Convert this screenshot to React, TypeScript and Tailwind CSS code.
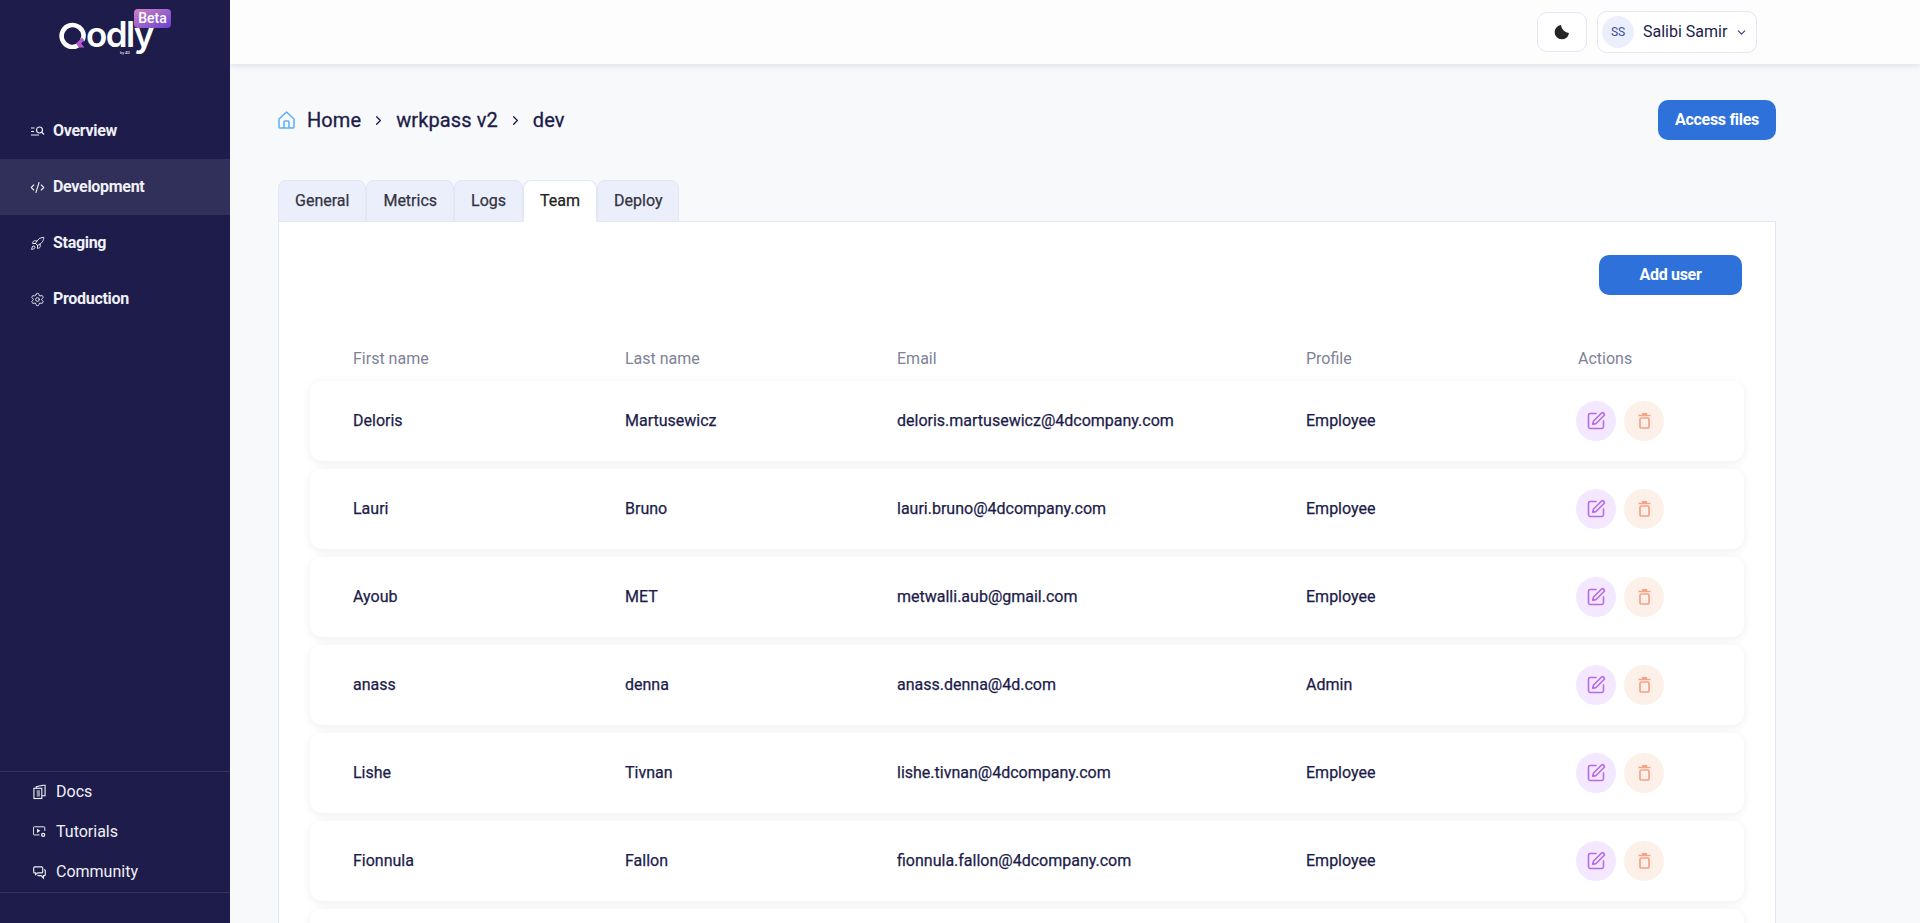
import React from 'react';
import { CodeXml, Rocket, Settings, SquarePen, ChevronDown, ChevronRight } from 'lucide-react';

const navItems = [
  { label: 'Overview', icon: <OverviewIcon /> },
  { label: 'Development', icon: <CodeXml size={15} strokeWidth={1.7} />, active: true },
  { label: 'Staging', icon: <Rocket size={15} strokeWidth={1.5} /> },
  { label: 'Production', icon: <Settings size={15} strokeWidth={1.5} /> },
];

const users = [
  { first: 'Deloris', last: 'Martusewicz', email: 'deloris.martusewicz@4dcompany.com', profile: 'Employee' },
  { first: 'Lauri', last: 'Bruno', email: 'lauri.bruno@4dcompany.com', profile: 'Employee' },
  { first: 'Ayoub', last: 'MET', email: 'metwalli.aub@gmail.com', profile: 'Employee' },
  { first: 'anass', last: 'denna', email: 'anass.denna@4d.com', profile: 'Admin' },
  { first: 'Lishe', last: 'Tivnan', email: 'lishe.tivnan@4dcompany.com', profile: 'Employee' },
  { first: 'Fionnula', last: 'Fallon', email: 'fionnula.fallon@4dcompany.com', profile: 'Employee' },
];

const tabs = ['General', 'Metrics', 'Logs', 'Team', 'Deploy'];

function OverviewIcon() {
  return (
    <svg width="15" height="15" viewBox="0 0 15 15" fill="none" stroke="currentColor" strokeWidth="1.2">
      <path d="M1 4h3.5M1 7.5h3M1 11h8" />
      <circle cx="9.5" cy="6" r="3" />
      <path d="M11.7 8.2l2.3 2.3" />
    </svg>
  );
}

function DocsIcon() {
  return (
    <svg width="14" height="16" viewBox="0 0 14 16" fill="none" stroke="currentColor" strokeWidth="1.2">
      <rect x="1" y="4" width="8.5" height="11" />
      <path d="M3.5 4V2.2L11 .8h2V12h-3.5" />
      <rect x="4" y="6" width="3.5" height="7" fill="currentColor" fillOpacity="0.55" stroke="none" />
    </svg>
  );
}

function TutorialsIcon() {
  return (
    <svg width="16" height="14" viewBox="0 0 16 14" fill="none" stroke="currentColor" strokeWidth="1.2">
      <path d="M8 10.6H1.5a1 1 0 0 1-1-1V1.6a1 1 0 0 1 1-1h12a1 1 0 0 1 1 1v4" />
      <path d="M5 3v5.2l4-2.6z" fill="currentColor" stroke="none" />
      <circle cx="12.5" cy="10.5" r="1.9" strokeWidth="1.6" />
    </svg>
  );
}

function CommunityIcon() {
  return (
    <svg width="15" height="15" viewBox="0 0 15 15" fill="none" stroke="currentColor" strokeWidth="1.3">
      <path d="M2 1h8a1.2 1.2 0 0 1 1.2 1.2v4.6A1.2 1.2 0 0 1 10 8H5.5L3 10V8H2A1.2 1.2 0 0 1 .8 6.8V2.2A1.2 1.2 0 0 1 2 1z" />
      <path d="M12.6 4.3a1.4 1.4 0 0 1 1.6 1.4v4a1.4 1.4 0 0 1-1.4 1.4h-.8V14l-2.6-2.9H6.5a2 2 0 0 1-1.4-.6" />
    </svg>
  );
}

function HomeIcon() {
  return (
    <svg width="17" height="18" viewBox="0 0 17 18" fill="none" stroke="#5aaefb" strokeWidth="1.5" strokeLinejoin="round">
      <path d="M1 8l7.5-7L16 8v8a1 1 0 0 1-1 1H2a1 1 0 0 1-1-1z" />
      <path d="M6 17v-6a1 1 0 0 1 1-1h3a1 1 0 0 1 1 1v6" />
    </svg>
  );
}

function TrashIcon() {
  return (
    <svg width="13" height="16" viewBox="0 0 13 16" fill="none" stroke="#f5a285" strokeWidth="1.7">
      <path d="M.5 2.5h12M4 .8h5" />
      <rect x="2" y="5" width="9" height="10" rx="1.2" />
    </svg>
  );
}

function MoonIcon() {
  return (
    <svg width="16" height="16" viewBox="0 0 16 16" fill="#252525">
      <path d="M7 1A7.2 7.2 0 1 0 15 9 9 9 0 0 1 7 1z" />
    </svg>
  );
}

function Logo() {
  return (
    <div className="relative h-[64px] w-full">
      <div className="absolute left-[59px] top-[22px] flex items-start">
        <svg width="28" height="27" viewBox="0 0 28 27">
          <path d="M19 23.6A11 11 0 1 1 24.6 13a11 11 0 0 1-1.4 5.5" fill="none" stroke="#ffffff" strokeWidth="4.6" />
          <path d="M23 15.5l-6 6 3 4h5.5l-3.4-4 3.2-3.2z" fill="#b45bd0" />
        </svg>
        <span className="ml-[-1px] mt-[-8px] font-['Inter',sans-serif] text-[35px] font-semibold leading-[40px] tracking-[-1.6px] text-white">odly</span>
      </div>
      <div className="absolute left-[120px] top-[50px] text-[4px] leading-[5px] text-white">by 4D</div>
      <div className="absolute left-[134px] top-[9px] flex h-[19px] w-[37px] items-center justify-center rounded-[4px] bg-gradient-to-br from-[#d47ec4] to-[#6a3ed0] text-[14px] font-medium text-white">Beta</div>
    </div>
  );
}

export default function App() {
  return (
    <div className="flex h-[923px] w-[1920px] overflow-hidden bg-[#f8f9fb] font-['Roboto',sans-serif]" id="team-page">

      {/* Sidebar */}
      <aside className="relative z-20 flex w-[230px] shrink-0 flex-col bg-[#1d1c4b] text-[#f0f0f6]">
        <Logo />
        <nav className="mt-[39px] flex flex-col">
          {navItems.map((item) => (
            <div key={item.label} className={`flex h-[56px] items-center gap-[8px] pl-[30px] ${item.active ? 'bg-[#30305a]' : ''}`}>
              <span className="flex w-[15px] justify-center">{item.icon}</span>
              <span className="text-[16px] font-bold tracking-[-0.3px]">{item.label}</span>
            </div>
          ))}
        </nav>
        <div className="mt-auto mb-[30px] flex flex-col border-y border-[#33335c]">
          <div className="flex h-[40px] items-center gap-[10px] pl-[33px]"><span className="flex w-[13px] justify-center"><DocsIcon /></span><span className="text-[16px]">Docs</span></div>
          <div className="flex h-[40px] items-center gap-[10px] pl-[33px]"><span className="flex w-[13px] justify-center"><TutorialsIcon /></span><span className="text-[16px]">Tutorials</span></div>
          <div className="flex h-[40px] items-center gap-[10px] pl-[33px]"><span className="flex w-[13px] justify-center"><CommunityIcon /></span><span className="text-[16px]">Community</span></div>
        </div>
      </aside>

      <div className="flex min-w-0 flex-1 flex-col">
        {/* Top bar */}
        <header className="z-10 flex h-[64px] shrink-0 items-center justify-end gap-[10px] bg-[#fdfdfe] pr-[163px] shadow-[0_2px_6px_rgba(190,195,215,0.45)]">
          <button className="flex h-[40px] w-[50px] items-center justify-center rounded-[10px] border border-[#e3e7f5] bg-white"><MoonIcon /></button>
          <button className="flex h-[42px] w-[160px] items-center rounded-[10px] border border-[#e3e7f5] bg-white pl-[4px]">
            <span className="flex h-[32px] w-[32px] items-center justify-center rounded-full bg-[#ebeffc] text-[12px] text-[#3e4a9e]">SS</span>
            <span className="ml-[9px] text-[16px] text-[#1c1c4a]">Salibi Samir</span>
            <ChevronDown size={13} strokeWidth={2} className="ml-[8px] text-[#2f3a8c]" />
          </button>
        </header>

        <main className="flex-1 overflow-hidden pl-[48px] pr-[144px]">
          {/* Breadcrumb row */}
          <div className="mt-[36px] flex h-[40px] items-center">
            <HomeIcon />
            <div className="ml-[12px] flex items-center gap-[10px] text-[20px] tracking-[0.1px] text-[#1c1c4a] [-webkit-text-stroke:0.3px]">
              <span>Home</span>
              <ChevronRight size={15} strokeWidth={2} />
              <span>wrkpass v2</span>
              <ChevronRight size={15} strokeWidth={2} />
              <span>dev</span>
            </div>
            <button className="ml-auto h-[40px] w-[118px] rounded-[10px] bg-[#2e71da] text-[16px] font-bold tracking-[-0.3px] text-white">Access files</button>
          </div>

          {/* Tabs */}
          <div className="mt-[40px] flex text-[16px] [-webkit-text-stroke:0.25px]">
            {tabs.map((tab) => (
              <div
                key={tab}
                className={`relative mb-[-1px] flex h-[42px] items-center rounded-t-[8px] border border-[#e3e7f5] px-[16px] ${tab === 'Team' ? 'border-b-white bg-white text-[#222]' : 'bg-[#ebeffc] text-[#333340]'}`}
              >
                {tab}
              </div>
            ))}
          </div>

          {/* Team panel */}
          <section className="h-[800px] border border-[#e3e7f5] bg-white pl-[31px] pr-[31px]">
            <div className="mt-[33px] flex justify-end pr-[2px]">
              <button className="h-[40px] w-[143px] rounded-[10px] bg-[#2e71da] text-[16px] font-bold tracking-[-0.3px] text-white">Add user</button>
            </div>
            <div className="mt-[52px] grid h-[22px] grid-cols-[272px_272px_409px_272px_1fr] items-center pl-[43px] text-[16px] text-[#7d8296]">
              <span>First name</span>
              <span>Last name</span>
              <span>Email</span>
              <span>Profile</span>
              <span>Actions</span>
            </div>
            <div className="mt-[12px] flex flex-col gap-[8px]">
              {users.map((u) => (
                <div key={u.email} className="grid h-[80px] grid-cols-[272px_272px_409px_272px_1fr] items-center rounded-[12px] bg-white pl-[43px] text-[16px] text-[#1c1c4a] shadow-[0_2px_10px_rgba(0,0,0,0.07)] [-webkit-text-stroke:0.25px]">
                  <span>{u.first}</span>
                  <span>{u.last}</span>
                  <span>{u.email}</span>
                  <span>{u.profile}</span>
                  <div className="ml-[-2px] flex gap-[8px]">
                    <span className="flex h-[40px] w-[40px] items-center justify-center rounded-full bg-[#f3e8ff] text-[#b968ea]"><SquarePen size={20} strokeWidth={1.9} /></span>
                    <span className="flex h-[40px] w-[40px] items-center justify-center rounded-full bg-[#fdf0e9]"><TrashIcon /></span>
                  </div>
                </div>
              ))}
              <div className="h-[80px] rounded-[12px] bg-white shadow-[0_2px_10px_rgba(0,0,0,0.07)]" />
            </div>
          </section>
        </main>
      </div>
    </div>
  );
}
